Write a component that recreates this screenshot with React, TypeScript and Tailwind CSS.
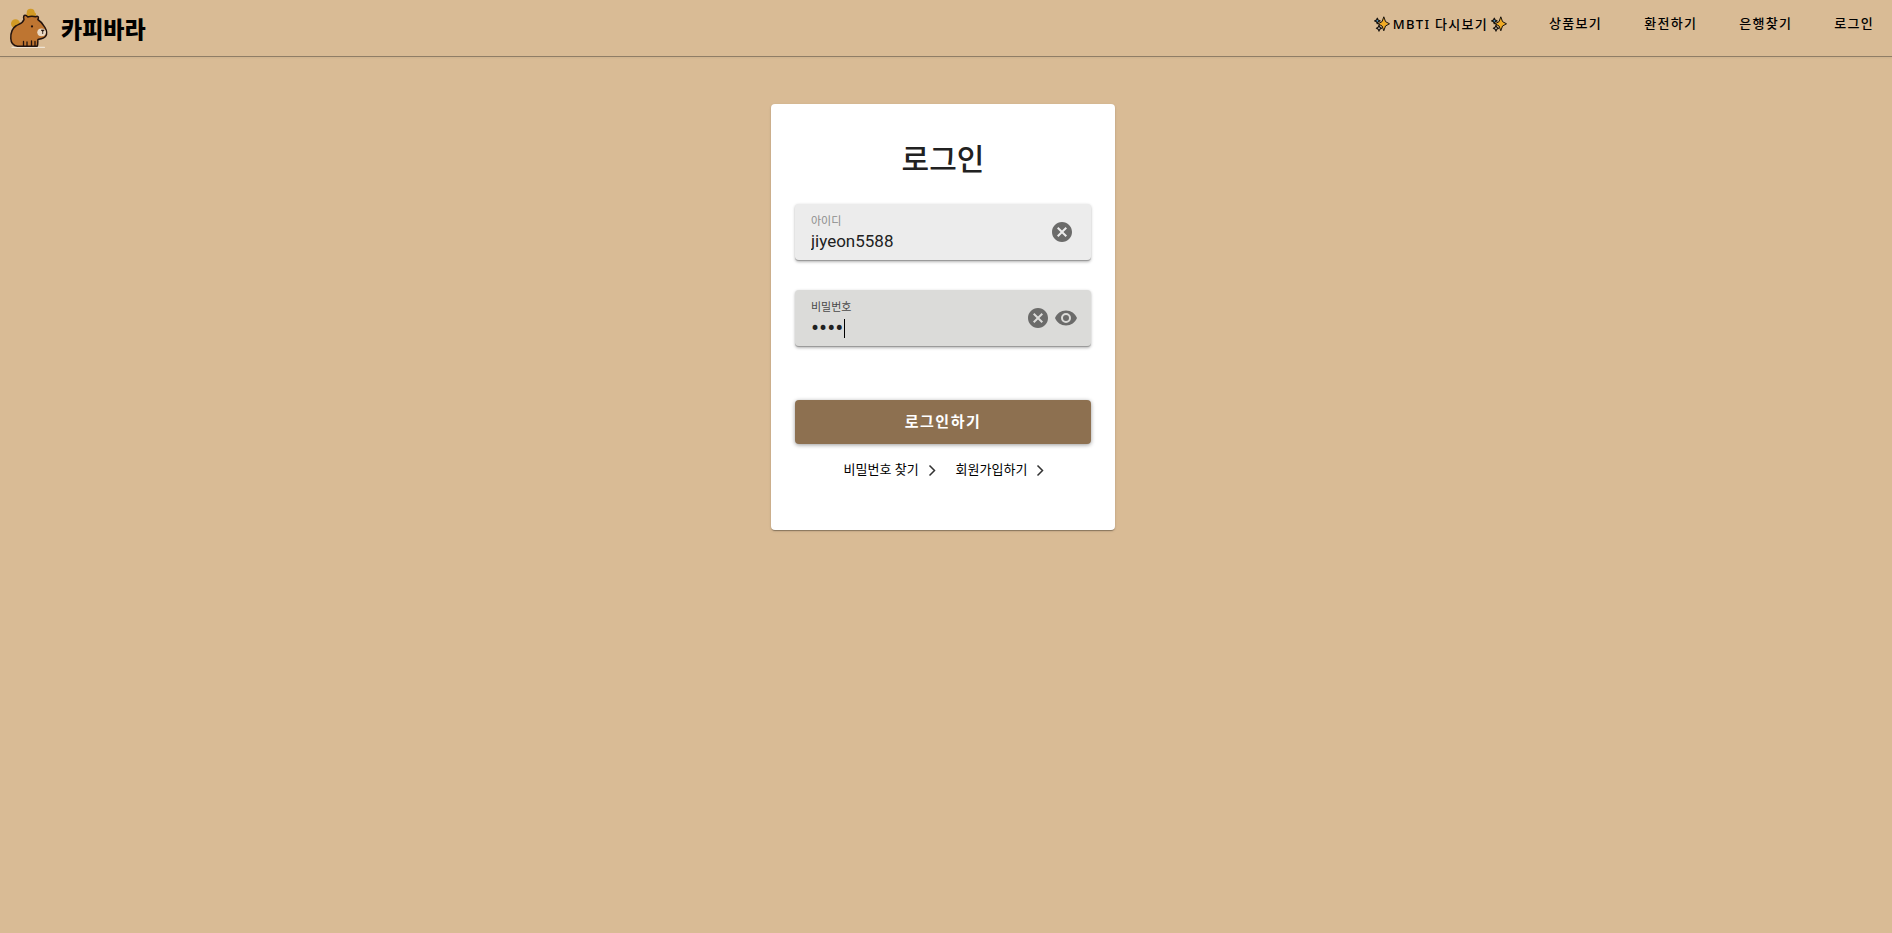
import React, { useState } from "react";

function Capybara() {
  return (
    <svg viewBox="0 0 50 50" className="h-[50px] w-[50px]" aria-hidden="true">
      <path d="M8 43.300h32.500" stroke="#efe3d3" strokeWidth="1.200" strokeLinecap="round" />
      <circle cx="26.700" cy="8.800" r="4" fill="#d19a25" />
      <rect x="22.500" y="8.500" width="9.500" height="4" rx="1.500" fill="#d19a25" />
      <circle cx="11.500" cy="19.700" r="4.500" fill="#d19a25" />
      <path
        d="M20 15.500C19 12.500 20 11 21.500 11.300c1.200.2 1.800 1 2.200 1.700 2.600-.8 5.300-.8 8-.2 1.300-1 2.800-.4 2.700 1-.1.800-.3 1.200-.6 1.700 3.200 2 5.400 4.700 7.200 8 1.800 3.200 2.200 6.300.7 8.600-1.700 2.500-4.700 2.800-7.700 3.300-.5 2.200.2 4.600-.8 6.800H13.500C9 41.800 7 39 6.800 34.500c-.2-6 1.400-10.200 5-12.500C15.500 19.700 18.800 19.500 20 15.500z"
        fill="#be7531"
        stroke="#23130e"
        strokeWidth="1.500"
        strokeLinejoin="round"
      />
      <path d="M19.500 37.500v4.500M23 38v4M27.500 37v5M31 37.500v4.500" stroke="#23130e" strokeWidth="1.300" strokeLinecap="round" />
      <ellipse cx="37.600" cy="28.300" rx="4.300" ry="3.900" fill="#ead9c4" />
      <path d="M37.200 26h3l-1.500 1.800z" fill="#23130e" stroke="#23130e" strokeWidth=".6" />
      <path d="M38.700 27.800v2.200" stroke="#23130e" strokeWidth=".8" />
      <circle cx="28" cy="22.400" r="1.100" fill="#23130e" />
    </svg>
  );
}

function Sparkles() {
  return (
    <svg viewBox="0 0 16 16" className="h-4 w-4 shrink-0" aria-hidden="true">
      <g stroke="#17120d" strokeLinejoin="round">
        <path d="M3.300 2.200l.8 1.800 1.900.9-1.900.9-.8 1.900-.8-1.900L.7 4.900l1.800-.9z" fill="#55b4ee" strokeWidth="1.200" />
        <path d="M5 9.300l.8 2 1.800.9-1.800.9-.8 2-.8-2-1.800-.9 1.800-.9z" fill="#f4e9d9" strokeWidth="1.200" />
        <path d="M9.800.8l1.700 4.800 4 2.200-4 2.200-1.700 4.800L8.100 10l-4-2.200 4-2.200z" fill="#f0ab26" strokeWidth="1" />
      </g>
    </svg>
  );
}

function ClearIcon() {
  return (
    <svg viewBox="0 0 24 24" className="h-6 w-6" fill="#6b6b6a" aria-hidden="true">
      <path d="M12 2C6.470 2 2 6.470 2 12s4.470 10 10 10 10-4.470 10-10S17.530 2 12 2m5 13.590L15.590 17 12 13.410 8.410 17 7 15.590 10.590 12 7 8.410 8.410 7 12 10.590 15.590 7 17 8.410 13.410 12z" />
    </svg>
  );
}

function EyeIcon() {
  return (
    <svg viewBox="0 0 24 24" className="h-6 w-6" fill="#6b6b6a" aria-hidden="true">
      <path d="M12 9a3 3 0 0 0-3 3 3 3 0 0 0 3 3 3 3 0 0 0 3-3 3 3 0 0 0-3-3m0 8a5 5 0 0 1-5-5 5 5 0 0 1 5-5 5 5 0 0 1 5 5 5 5 0 0 1-5 5m0-12.500C7 4.500 2.730 7.610 1 12c1.730 4.390 6 7.500 11 7.500s9.270-3.110 11-7.500c-1.730-4.390-6-7.500-11-7.500" />
    </svg>
  );
}

function Chevron() {
  return (
    <svg viewBox="0 0 20 20" className="h-5 w-5" fill="none" stroke="#333333" strokeWidth="1.500" aria-hidden="true">
      <path d="M7.500 5.500 12.500 10.500 7.500 15.500" />
    </svg>
  );
}

const navLinks = ["상품보기", "환전하기", "은행찾기", "로그인"];

export default function App() {
  const [userId, setUserId] = useState("jiyeon5588");
  const [password, setPassword] = useState("5588");
  const [visible, setVisible] = useState(false);

  return (
    <div className="min-h-screen bg-[#d9bb95] font-['Roboto','Noto_Sans_CJK_KR',sans-serif] text-[#212121]">
      <header className="flex h-[57px] items-start justify-between border-b border-[#8f7d66] pr-[18px] pl-1 text-black shadow-xs">
        <a href="#home" className="flex items-center gap-[7px] pt-1">
          <Capybara />
          <span className="pt-1 text-[23px] leading-[46px] font-black">카피바라</span>
        </a>
        <nav className="flex items-start gap-[42px] pt-3 text-[13px] leading-6 font-medium tracking-widest">
          <a href="#mbti" className="flex items-center gap-[3px] font-['Noto_Sans','Noto_Sans_CJK_KR',sans-serif]">
            <Sparkles />
            <span>MBTI 다시보기</span>
            <Sparkles />
          </a>
          {navLinks.map((label) => (
            <a key={label} href={"#" + label}>
              {label}
            </a>
          ))}
        </nav>
      </header>

      <main className="flex justify-center pt-[47px] pr-1.5">
        <form
          className="flex w-[344px] flex-col rounded bg-white px-6 pt-[34px] pb-[46px] shadow-[0_2px_1px_-1px_rgba(0,0,0,0.2),0_1px_1px_rgba(0,0,0,0.14),0_1px_3px_rgba(0,0,0,0.12)]"
          onSubmit={(e) => e.preventDefault()}
        >
          <h1 className="text-center text-[30px] leading-[44px] font-medium">로그인</h1>

          <div className="mt-[22px] flex h-[57px] items-center rounded border-b border-[#9b9b9b] bg-[#ececec] pr-[17px] pl-4 shadow-[0_1px_3px_rgba(0,0,0,0.3)]">
            <div className="flex min-w-0 flex-1 flex-col pt-1">
              <label htmlFor="user-id" className="text-[11px] leading-4 text-[#8b8b8b]">
                아이디
              </label>
              <input
                id="user-id"
                type="text"
                value={userId}
                onChange={(e) => setUserId(e.target.value)}
                className="h-6 w-full bg-transparent text-[17px] outline-none"
              />
            </div>
            <button type="button" aria-label="아이디 지우기" onClick={() => setUserId("")}>
              <ClearIcon />
            </button>
          </div>

          <div className="mt-[29px] flex h-[57px] items-center rounded border-b border-[#9b9b9b] bg-[#dbdbd9] pr-[13px] pl-4 shadow-[0_1px_3px_rgba(0,0,0,0.3)]">
            <div className="flex min-w-0 flex-1 flex-col pt-1">
              <label htmlFor="password" className="text-[11px] leading-4 text-[#4a4a4a]">
                비밀번호
              </label>
              <div className="relative flex">
                <input
                  id="password"
                  type={visible ? "text" : "password"}
                  value={password}
                  onChange={(e) => setPassword(e.target.value)}
                  className={
                    "h-6 w-full bg-transparent caret-transparent outline-none " +
                    (visible ? "text-[17px]" : "text-2xl")
                  }
                />
                <span className="absolute top-[3px] left-[33px] h-[19px] w-px bg-black" />
              </div>
            </div>
            <div className="flex gap-1">
              <button type="button" aria-label="비밀번호 지우기" onClick={() => setPassword("")}>
                <ClearIcon />
              </button>
              <button type="button" aria-label="비밀번호 보기" onClick={() => setVisible(!visible)}>
                <EyeIcon />
              </button>
            </div>
          </div>

          <button
            type="submit"
            className="mt-[53px] h-11 rounded bg-[#8d7050] text-[15px] font-bold tracking-widest text-white shadow-[0_1px_4px_rgba(0,0,0,0.4)]"
          >
            로그인하기
          </button>

          <div className="mt-3 flex justify-center gap-3.5 pl-2 text-[13px] leading-7 text-black">
            <a href="#find-password" className="flex items-center gap-[3px]">
              비밀번호 찾기
              <Chevron />
            </a>
            <a href="#sign-up" className="flex items-center gap-[3px]">
              회원가입하기
              <Chevron />
            </a>
          </div>
        </form>
      </main>
    </div>
  );
}
